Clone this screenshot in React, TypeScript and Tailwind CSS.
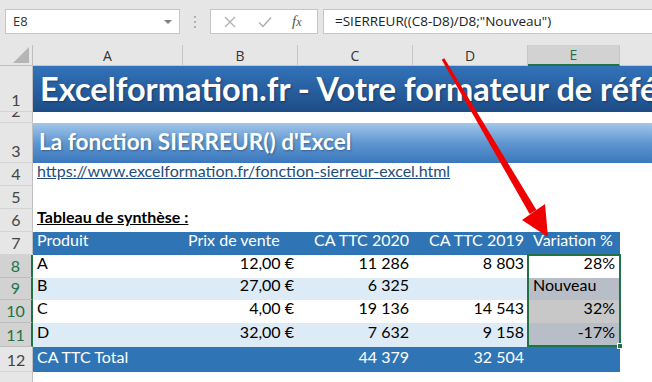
import React from "react";

interface Column {
  key: string;
  width: string;
}

interface DataRow {
  n: number;
  height: string;
  product: string;
  price: string;
  ca2020: string;
  ca2019: string;
  variation: string;
  banded: boolean;
  selBg: string;
  textVariation?: boolean;
}

const COLUMNS: Column[] = [
  { key: "A", width: "w-[150px]" },
  { key: "B", width: "w-[115px]" },
  { key: "C", width: "w-[115px]" },
  { key: "D", width: "w-[115px]" },
  { key: "E", width: "w-[92px]" },
];

const DATA: DataRow[] = [
  { n: 8, height: "h-[23px]", product: "A", price: "12,00 €", ca2020: "11 286", ca2019: "8 803", variation: "28%", banded: false, selBg: "bg-white" },
  { n: 9, height: "h-[22px]", product: "B", price: "27,00 €", ca2020: "6 325", ca2019: "", variation: "Nouveau", banded: true, selBg: "bg-[#b7bec7]", textVariation: true },
  { n: 10, height: "h-[23px]", product: "C", price: "4,00 €", ca2020: "19 136", ca2019: "14 543", variation: "32%", banded: false, selBg: "bg-[#c8c8c8]" },
  { n: 11, height: "h-[24px]", product: "D", price: "32,00 €", ca2020: "7 632", ca2019: "9 158", variation: "-17%", banded: true, selBg: "bg-[#b7bec7]" },
];

function RowHeader({ n, selected }: { n: number | string; selected?: boolean }) {
  return (
    <div
      className={`flex w-[33px] shrink-0 items-end justify-center overflow-hidden border-b pb-[1px] text-[16px] leading-[20px] ${
        selected
          ? "border-b-[#bdbdbd] border-r-2 border-r-[#217346] bg-[#d2d2d2] text-[#217346]"
          : "border-b-[#d4d4d4] border-r border-r-[#bfbfbf] bg-[#e6e6e6] text-[#444]"
      }`}
    >
      {n}
    </div>
  );
}

function FormulaBar() {
  return (
    <div className="flex h-[45px] items-start bg-[#e6e6e6] pt-[9px] font-['Open_Sans',sans-serif]">
      <div className="ml-[5px] flex h-[25px] w-[175px] items-center justify-between border border-[#c6c6c6] bg-white pl-[7px] pr-[7px] text-[13px] text-[#333]">
        <span>E8</span>
        <span className="h-0 w-0 border-x-[4px] border-t-[4px] border-x-transparent border-t-[#808080]" />
      </div>
      <div className="ml-[14px] flex h-[25px] flex-col items-center justify-center gap-[3px]">
        <span className="h-[2px] w-[2px] bg-[#b0b0b0]" />
        <span className="h-[2px] w-[2px] bg-[#b0b0b0]" />
        <span className="h-[2px] w-[2px] bg-[#b0b0b0]" />
      </div>
      <div className="ml-[14px] flex h-[25px] w-[108px] items-center border border-[#c6c6c6] bg-white text-[#a6a6a6]">
        <svg className="ml-[13px]" width="12" height="12" viewBox="0 0 12 12">
          <path d="M1 1 L11 11 M11 1 L1 11" stroke="#b0b0b0" strokeWidth="1.3" fill="none" />
        </svg>
        <svg className="ml-[22px]" width="14" height="12" viewBox="0 0 14 12">
          <path d="M1 6.5 L5 10.5 L13 1.5" stroke="#b0b0b0" strokeWidth="1.5" fill="none" />
        </svg>
        <span className="ml-[20px] font-['Liberation_Serif',serif] text-[15px] italic text-[#555]">
          f<span className="text-[12px]">x</span>
        </span>
      </div>
      <div className="ml-[5px] flex h-[25px] flex-1 items-center border border-r-0 border-[#c6c6c6] bg-white pl-[11px] text-[13.5px] text-[#222]">
        =SIERREUR((C8-D8)/D8;"Nouveau")
      </div>
    </div>
  );
}

function ColumnHeaders() {
  return (
    <div className="flex h-[21px] bg-[#e6e6e6] font-['Open_Sans',sans-serif] text-[14px] text-[#333]">
      <div className="relative w-[33px] shrink-0 border-b border-r border-[#bfbfbf]">
        <svg className="absolute bottom-[2px] right-[3px]" width="16" height="16" viewBox="0 0 16 16">
          <path d="M16 0 L16 16 L0 16 Z" fill="#b5b5b5" />
        </svg>
      </div>
      {COLUMNS.map((col) =>
        col.key === "E" ? (
          <div
            key={col.key}
            className={`${col.width} flex shrink-0 items-center justify-center border-b-2 border-r border-b-[#217346] border-r-[#c6c6c6] bg-[#d2d2d2] text-[#217346]`}
          >
            {col.key}
          </div>
        ) : (
          <div
            key={col.key}
            className={`${col.width} flex shrink-0 items-center justify-center border-b border-r border-[#c6c6c6]`}
          >
            {col.key}
          </div>
        )
      )}
      <div className="flex-1 border-b border-[#c6c6c6]" />
    </div>
  );
}

function Cell({
  width,
  align = "right",
  children,
  className = "",
}: {
  width: string;
  align?: "left" | "right";
  children?: React.ReactNode;
  className?: string;
}) {
  return (
    <div
      className={`${width} flex shrink-0 items-end whitespace-nowrap pb-[3px] ${
        align === "left" ? "justify-start pl-[4px]" : "justify-end pr-[4px]"
      } ${className}`}
    >
      {children}
    </div>
  );
}

function Arrow() {
  return (
    <svg className="pointer-events-none absolute left-0 top-0" width="652" height="382" viewBox="0 0 652 382">
      <polygon points="444.3,58.2 441.7,59.8 529.6,214 536.4,210" fill="#f00000" />
      <polygon points="548,237 522,220 545,204" fill="#f00000" />
    </svg>
  );
}

export default function App() {
  return (
    <div className="relative h-[382px] w-[652px] overflow-hidden bg-white font-['Lato',sans-serif] text-[16px] text-black">
      <FormulaBar />
      <ColumnHeaders />

      {/* row 1 - title banner */}
      <div className="flex h-[46px]">
        <RowHeader n={1} />
        <div className="flex flex-1 items-end overflow-hidden whitespace-nowrap bg-gradient-to-b from-[#3373ba] to-[#1d4c86] pb-[3px] pl-[7px] text-[32.5px] font-bold leading-[40px] text-white [text-shadow:1px_1px_2px_rgba(0,0,0,0.35)]">
          Excelformation.fr - Votre formateur de référence
        </div>
      </div>

      {/* row 2 */}
      <div className="flex h-[11px]">
        <RowHeader n={2} />
        <div className="flex-1" />
      </div>

      {/* row 3 - subtitle */}
      <div className="flex h-[40px]">
        <RowHeader n={3} />
        <div className="flex flex-1 items-end overflow-hidden whitespace-nowrap bg-gradient-to-b from-[#a2c7ea] via-[#5f96d1] to-[#3a77bd] pb-[7px] pl-[6px] text-[22.6px] font-bold leading-[28px] text-white [text-shadow:1px_1px_2px_rgba(0,0,0,0.3)]">
          La fonction SIERREUR() d'Excel
        </div>
      </div>

      {/* row 4 - link */}
      <div className="flex h-[23px]">
        <RowHeader n={4} />
        <div className="flex flex-1 items-end pb-[3px] pl-[4px] text-[#1f4e79] underline">
          https://www.excelformation.fr/fonction-sierreur-excel.html
        </div>
      </div>

      {/* row 5 */}
      <div className="flex h-[23px]">
        <RowHeader n={5} />
        <div className="flex-1" />
      </div>

      {/* row 6 */}
      <div className="flex h-[23px]">
        <RowHeader n={6} />
        <div className="flex flex-1 items-end pb-[3px] pl-[4px] font-bold underline">Tableau de synthèse :</div>
      </div>

      {/* row 7 - table header */}
      <div className="flex h-[23px]">
        <RowHeader n={7} />
        <div className="flex bg-[#2f75b5] text-white">
          <Cell width="w-[150px]" align="left">Produit</Cell>
          <Cell width="w-[115px]" align="left" className="pl-[5px]">Prix de vente</Cell>
          <Cell width="w-[115px]">CA TTC 2020</Cell>
          <Cell width="w-[115px]">CA TTC 2019</Cell>
          <Cell width="w-[92px]" align="left" className="pl-[5px]">Variation %</Cell>
        </div>
      </div>

      {DATA.map((row) => (
        <div key={row.n} className={`flex ${row.height}`}>
          <RowHeader n={row.n} selected />
          <div className={`flex ${row.banded ? "bg-[#ddebf7]" : "bg-white"}`}>
            <Cell width="w-[150px]" align="left">{row.product}</Cell>
            <Cell width="w-[115px]">{row.price}</Cell>
            <Cell width="w-[115px]">{row.ca2020}</Cell>
            <Cell width="w-[115px]">{row.ca2019}</Cell>
            <Cell
              width="w-[92px]"
              align={row.textVariation ? "left" : "right"}
              className={`${row.selBg} ${row.textVariation ? "pl-[5px]" : "pr-[5px]"}`}
            >
              {row.variation}
            </Cell>
          </div>
        </div>
      ))}

      {/* row 12 - total */}
      <div className="flex h-[25px]">
        <RowHeader n={12} />
        <div className="flex bg-[#2f75b5] text-white">
          <Cell width="w-[150px]" align="left">CA TTC Total</Cell>
          <Cell width="w-[115px]" />
          <Cell width="w-[115px]">44 379</Cell>
          <Cell width="w-[115px]">32 504</Cell>
          <Cell width="w-[92px]" />
        </div>
      </div>

      {/* row 13 */}
      <div className="flex h-[30px]">
        <RowHeader n={13} />
        <div className="flex-1" />
      </div>

      {/* selection E8:E11 */}
      <div className="pointer-events-none absolute left-[527px] top-[254px] h-[93px] w-[94px] border-2 border-[#217346]" />
      <div className="pointer-events-none absolute left-[617px] top-[343px] h-[6px] w-[6px] border border-white bg-[#217346]" />

      <Arrow />
    </div>
  );
}
